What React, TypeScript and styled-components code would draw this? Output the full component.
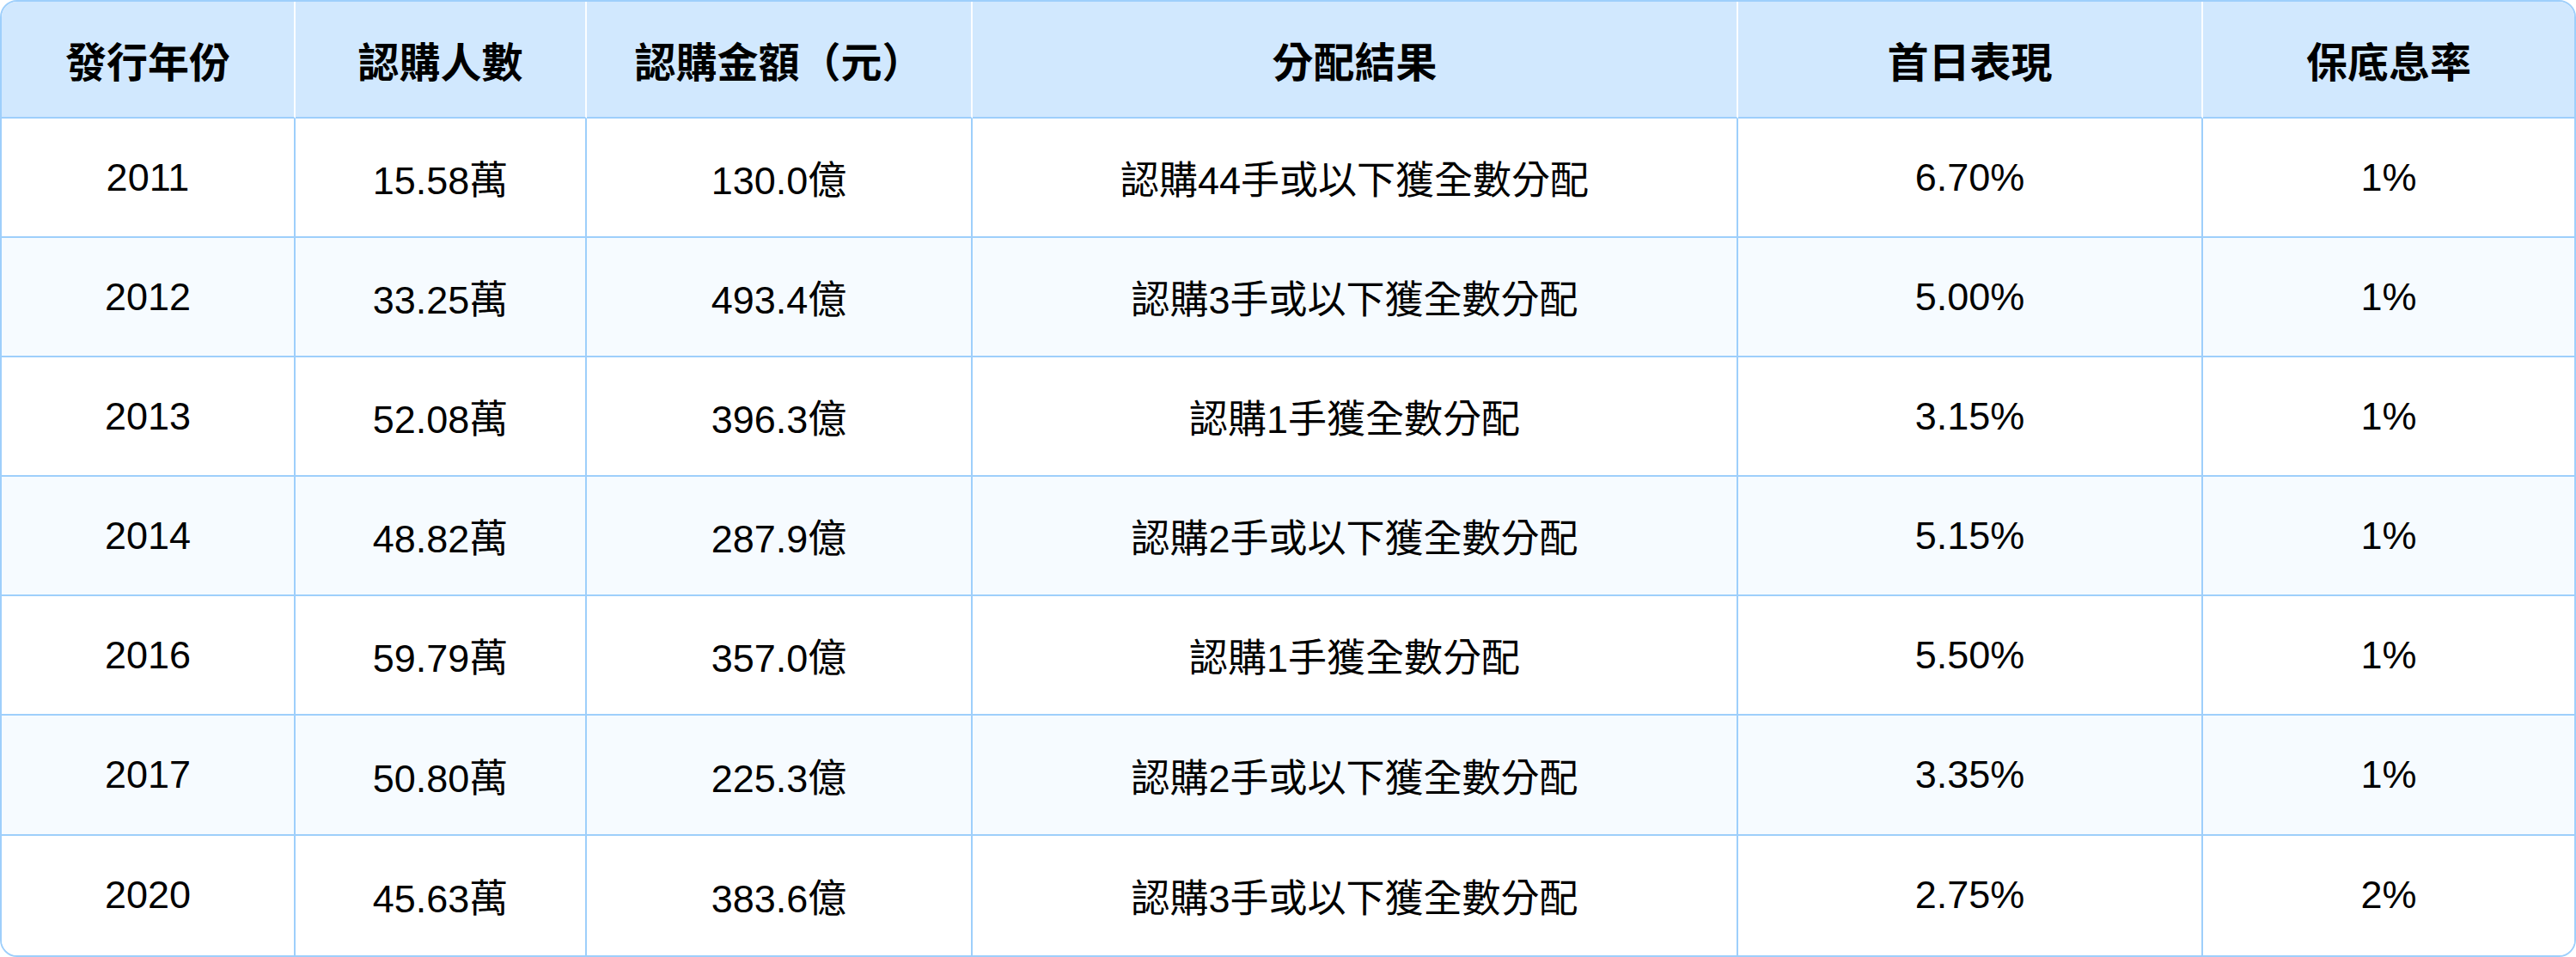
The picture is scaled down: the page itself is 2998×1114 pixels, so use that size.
import React from "react";
import styled, { createGlobalStyle } from "styled-components";

const GlobalStyle = createGlobalStyle`
  html, body {
    margin: 0;
    padding: 0;
    background: #ffffff;
  }
  body {
    font-family: "Liberation Sans", "Noto Sans CJK TC", sans-serif;
    color: #000000;
  }
`;

const columns = [
  { title: "發行年份", width: 342 },
  { title: "認購人數", width: 339 },
  { title: "認購金額（元）", width: 449 },
  { title: "分配結果", width: 891 },
  { title: "首日表現", width: 541 },
  { title: "保底息率", width: 432 },
];

const rows = [
  ["2011", "15.58萬", "130.0億", "認購44手或以下獲全數分配", "6.70%", "1%"],
  ["2012", "33.25萬", "493.4億", "認購3手或以下獲全數分配", "5.00%", "1%"],
  ["2013", "52.08萬", "396.3億", "認購1手獲全數分配", "3.15%", "1%"],
  ["2014", "48.82萬", "287.9億", "認購2手或以下獲全數分配", "5.15%", "1%"],
  ["2016", "59.79萬", "357.0億", "認購1手獲全數分配", "5.50%", "1%"],
  ["2017", "50.80萬", "225.3億", "認購2手或以下獲全數分配", "3.35%", "1%"],
  ["2020", "45.63萬", "383.6億", "認購3手或以下獲全數分配", "2.75%", "2%"],
];

const App: React.FC = () => {
  return (
    <>
      <GlobalStyle />
      <Frame>
        <Table>
          <colgroup>
            {columns.map((col) => (
              <col key={col.title} style={{ width: col.width }} />
            ))}
          </colgroup>
          <thead>
            <tr>
              {columns.map((col) => (
                <HeadCell key={col.title}>{col.title}</HeadCell>
              ))}
            </tr>
          </thead>
          <tbody>
            {rows.map((row, i) => (
              <BodyRow key={row[0]} $striped={i % 2 === 1}>
                {row.map((value, j) => (
                  <Cell key={j}>{value}</Cell>
                ))}
              </BodyRow>
            ))}
          </tbody>
        </Table>
      </Frame>
    </>
  );
};

const Frame = styled.div`
  width: 2998px;
  box-sizing: border-box;
  border: 2px solid #9ecffb;
  border-radius: 20px;
  overflow: hidden;
`;

const Table = styled.table`
  width: 100%;
  table-layout: fixed;
  border-collapse: separate;
  border-spacing: 0;
`;

const HeadCell = styled.th`
  height: 136px;
  box-sizing: border-box;
  padding: 0;
  background: #d1e8fe;
  border-bottom: 2px solid #9ecffb;
  border-right: 2px solid rgba(255, 255, 255, 0.9);
  font-family: "Noto Sans CJK TC", "Liberation Sans", sans-serif;
  font-size: 48px;
  font-weight: 700;
  text-align: center;
  vertical-align: middle;
  color: #000000;

  &:last-child {
    border-right: none;
  }
`;

const BodyRow = styled.tr<{ $striped: boolean }>`
  height: 139.1px;
  background: ${(p) => (p.$striped ? "#f6fbff" : "#ffffff")};

  &:last-child td {
    border-bottom: none;
  }
`;

const Cell = styled.td`
  box-sizing: border-box;
  padding: 0;
  border-bottom: 2px solid #9ecffb;
  border-right: 2px solid #9ecffb;
  font-family: "Liberation Sans", "Noto Sans CJK TC", sans-serif;
  font-size: 45px;
  font-weight: 400;
  text-align: center;
  vertical-align: middle;
  white-space: nowrap;

  &:last-child {
    border-right: none;
  }
`;

export default App;
